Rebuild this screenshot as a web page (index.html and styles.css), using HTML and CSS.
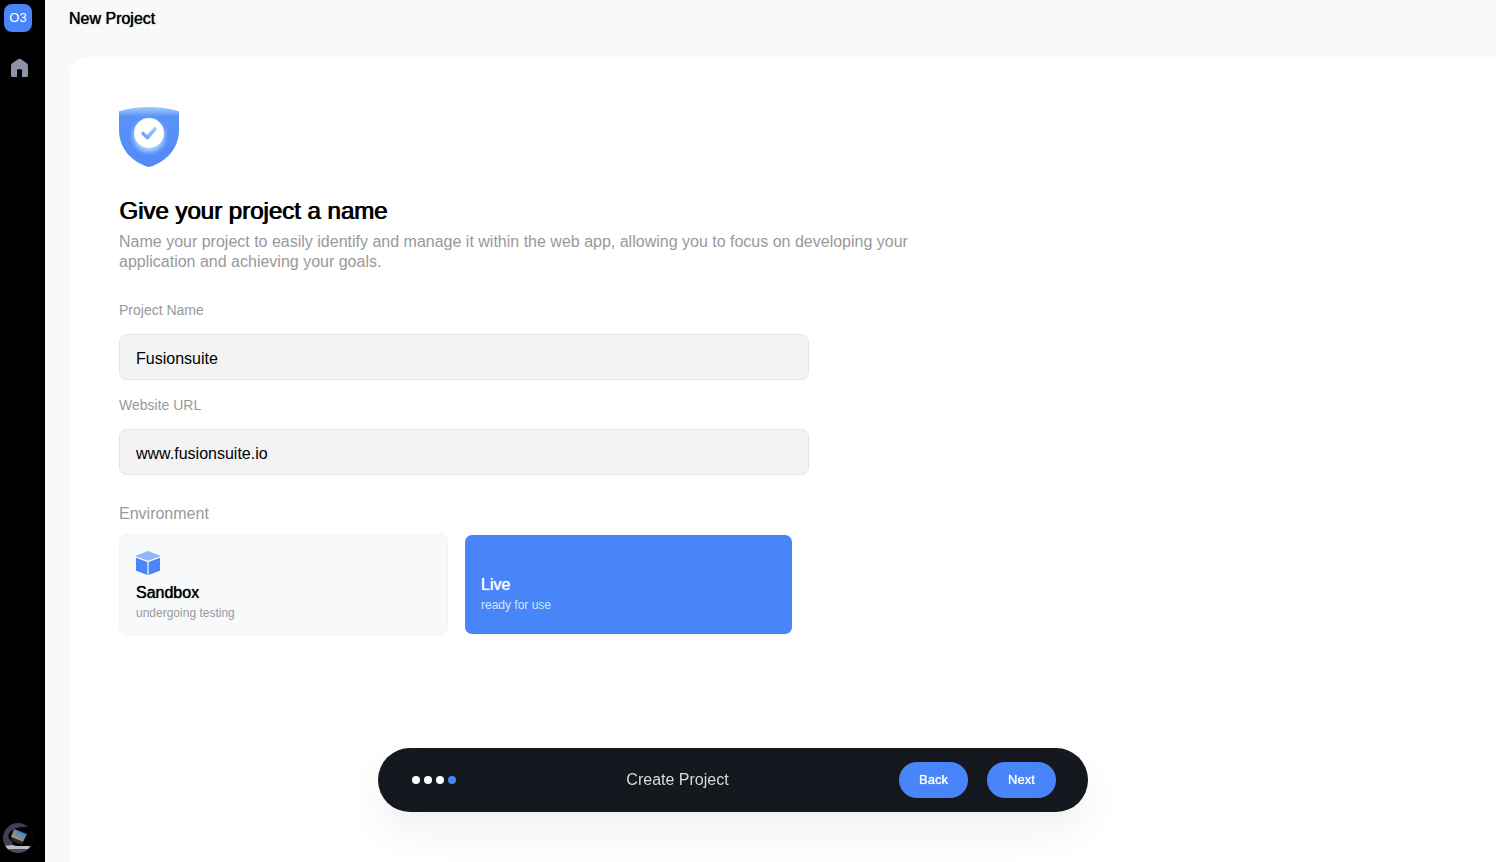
FILE: index.html
```html
<!DOCTYPE html>
<html lang="en">
<head>
    <meta charset="UTF-8">
    <meta name="viewport" content="width=device-width, initial-scale=1.0">
    <title>New Project</title>
    <link rel="stylesheet" href="styles.css">
</head>
<body>
<div class="app">
    <nav class="sidebar">
        <a href="#" class="logo">O3</a>
        <a href="#" class="nav-link" aria-label="Home">
            <svg width="24" height="24" viewBox="0 0 24 24">
                <path fill="#8f92a6" d="M11.700 3.400Q13.500 2.200 15.300 3.400L20.800 7.200Q22 8 22 9.500V19.500Q22 21 20.500 21H16V14.200Q16 13.200 15 13.200H12Q11 13.200 11 14.200V21H6.500Q5 21 5 19.500V9.500Q5 8 6.200 7.200Z"/>
            </svg>
        </a>
        <a href="#" class="avatar" aria-label="Account">
            <svg width="30" height="30" viewBox="0 0 30 30">
                <defs>
                    <clipPath id="round"><circle cx="15" cy="15" r="15"/></clipPath>
                    <linearGradient id="screen" x1="0" y1="1" x2="1" y2="0">
                        <stop offset="0" stop-color="#c9b79c"/>
                        <stop offset=".45" stop-color="#8d8478"/>
                        <stop offset=".55" stop-color="#5b8fc0"/>
                        <stop offset="1" stop-color="#31577f"/>
                    </linearGradient>
                </defs>
                <g clip-path="url(#round)">
                    <rect width="30" height="30" fill="#3d404e"/>
                    <path fill="#000" d="M11 6Q18 3 30 4V23H8Q12 20 7 17Q2 12 11 6Z"/>
                    <path fill="url(#screen)" d="M11 6L24 11L20 19L8 14Z"/>
                    <path fill="#24252b" d="M8 14L20 19L19 22L9 18Z"/>
                    <path fill="#b9bdcb" d="M0 23L10 22L13 23L28 23L26 26L4 27Z"/>
                    <path fill="#4a4d5c" d="M3 26L27 26V30H3Z"/>
                </g>
            </svg>
        </a>
    </nav>

    <main class="main">
        <header class="topbar">New Project</header>

        <form class="panel" id="project-form">
            <svg class="shield" width="60" height="60" viewBox="0 0 60 60">
                <defs>
                    <linearGradient id="top-light" x1="0" y1="0" x2="0" y2="1">
                        <stop offset="0" stop-color="#9ccbfb"/>
                        <stop offset=".07" stop-color="#83b6fa"/>
                        <stop offset=".16" stop-color="#5b91f8"/>
                        <stop offset="1" stop-color="#5389f7"/>
                    </linearGradient>
                    <linearGradient id="tick" x1="1" y1="0" x2="0" y2="1">
                        <stop offset="0" stop-color="#9fcdfb"/>
                        <stop offset="1" stop-color="#6a9ef8"/>
                    </linearGradient>
                    <filter id="glow" x="-50%" y="-50%" width="200%" height="200%">
                        <feGaussianBlur stdDeviation="2"/>
                    </filter>
                </defs>
                <path fill="url(#top-light)" d="M0 5Q0 4 1 4Q15 0 30 0Q45 0 59 4Q60 4 60 5V23C60 41 48 54 32 59.500Q30 60.300 28 59.500C12 54 0 41 0 23Z"/>
                <circle cx="30" cy="29" r="16" fill="#a9d3fd" filter="url(#glow)"/>
                <circle cx="30" cy="26" r="15" fill="#fff"/>
                <path fill="none" stroke="url(#tick)" stroke-width="3.600" stroke-linecap="round" stroke-linejoin="round" d="M24 26.500L28.400 30.500L36 22"/>
            </svg>

            <h1 class="title">Give your project a name</h1>
            <p class="intro">Name your project to easily identify and manage it within the web app, allowing you to focus on developing your application and achieving your goals.</p>

            <div class="field">
                <label for="name">Project Name</label>
                <input type="text" id="name" value="Fusionsuite">
            </div>
            <div class="field">
                <label for="url">Website URL</label>
                <input type="text" id="url" value="www.fusionsuite.io">
            </div>

            <fieldset class="environment">
                <legend>Environment</legend>
                <div class="cards">
                    <label class="card">
                        <input type="radio" name="environment" value="sandbox">
                        <svg width="24" height="24" viewBox="0 0 24 24">
                            <path fill="#92b6fb" d="M12 0L24 4.500V5.500L12 9.800L0 5.500V4.500Z"/>
                            <path fill="#4785f8" d="M0 6.700L11.400 11V24L0 19.800Z"/>
                            <path fill="#4785f8" d="M24 6.700L12.600 11V24L24 19.800Z"/>
                        </svg>
                        <span class="card-title">Sandbox</span>
                        <span class="card-text">undergoing testing</span>
                    </label>
                    <label class="card">
                        <input type="radio" name="environment" value="live" checked>
                        <svg width="24" height="16"></svg>
                        <span class="card-title">Live</span>
                        <span class="card-text">ready for use</span>
                    </label>
                </div>
            </fieldset>
        </form>
    </main>
</div>

<div class="steps">
    <div class="dots">
        <span></span>
        <span></span>
        <span></span>
        <span class="current"></span>
    </div>
    <div class="step-name">Create Project</div>
    <div class="buttons">
        <button type="button">Back</button>
        <button type="submit" form="project-form">Next</button>
    </div>
</div>
</body>
</html>
```

FILE: styles.css
```css
* {
    margin: 0;
    padding: 0;
    box-sizing: border-box;
}
body {
    font-family: "Liberation Sans", Arial, sans-serif;
    font-size: 16px;
    line-height: 20px;
    color: #000;
    background: #f9f9f9;
}
svg {
    display: block;
}
.app {
    display: flex;
    min-height: 100vh;
}

/* sidebar */
.sidebar {
    display: flex;
    flex-direction: column;
    align-items: center;
    width: 45px;
    padding: 4px 9px 9px 0;
    background: #000;
}
.logo {
    width: 28px;
    height: 28px;
    border-radius: 8px;
    background: #4785f8;
    color: #fff;
    font-size: 13px;
    line-height: 28px;
    text-align: center;
    text-decoration: none;
}
.nav-link {
    margin-top: 24px;
}
.avatar {
    margin-top: auto;
}

/* content */
.main {
    flex: 1;
    display: flex;
    flex-direction: column;
    padding-left: 24px;
}
.topbar {
    padding: 9px 0 28px;
    text-shadow: 0 0 1px #000;
}
.panel {
    flex: 1;
    padding: 50px;
    border-top-left-radius: 20px;
    background: #fff;
}
.title {
    margin-top: 28px;
    font-size: 24px;
    font-weight: normal;
    line-height: 32px;
    text-shadow: 1px 0 0 #000;
}
.intro {
    max-width: 830px;
    margin: 5px 0 28px;
    color: #999;
}
.field {
    max-width: 690px;
    margin-bottom: 15px;
}
.field label {
    display: block;
    margin-bottom: 14px;
    font-size: 14px;
    color: #999;
}
.field input {
    display: block;
    width: 100%;
    height: 46px;
    padding: 3px 16px 0;
    border: 1px solid #e5e5e5;
    border-radius: 8px;
    background: #f3f3f3;
    font: inherit;
    color: #000;
    outline: none;
}
.environment {
    max-width: 690px;
    margin-top: 29px;
    border: none;
}
.environment legend {
    margin-bottom: 10px;
    color: #999;
}
.cards {
    display: grid;
    grid-template-columns: 1fr 1fr;
    gap: 16px;
    padding-right: 16px;
}
.card {
    height: 101px;
    padding: 16px;
    border: 1px solid #f3f4f6;
    border-radius: 8px;
    background: #f8f9fb;
    cursor: pointer;
}
.card input {
    position: absolute;
    opacity: 0;
}
.card-title,
.card-text {
    display: block;
}
.card-title {
    margin-top: 8px;
    text-shadow: 0 0 1px currentColor;
}
.card-text {
    font-size: 12px;
    color: #999;
}
.card:has(input:checked) {
    border-color: transparent;
    background: #4785f8;
    background-clip: padding-box;
    color: #fff;
}
.card:has(input:checked) .card-text {
    color: #d5e3fd;
}

/* floating step bar */
.steps {
    position: fixed;
    left: 0;
    right: 30px;
    bottom: 50px;
    display: flex;
    justify-content: space-between;
    align-items: center;
    max-width: 710px;
    height: 64px;
    margin: 0 auto;
    padding: 0 32px 0 34px;
    border-radius: 32px;
    background: #16181f;
    box-shadow: 0 20px 40px rgba(0, 0, 0, 0.06);
}
.dots {
    display: flex;
    gap: 4px;
}
.dots span {
    width: 8px;
    height: 8px;
    border-radius: 50%;
    background: #fff;
}
.dots .current {
    background: #4785f8;
}
.step-name {
    color: #d9d9d9;
}
.buttons {
    display: flex;
    gap: 19px;
}
.buttons button {
    width: 69px;
    height: 36px;
    padding-bottom: 2px;
    border: none;
    border-radius: 18px;
    background: #4785f8;
    color: #fff;
    font-family: inherit;
    font-size: 13px;
    text-shadow: 0 0 1px #fff;
    cursor: pointer;
}
```
